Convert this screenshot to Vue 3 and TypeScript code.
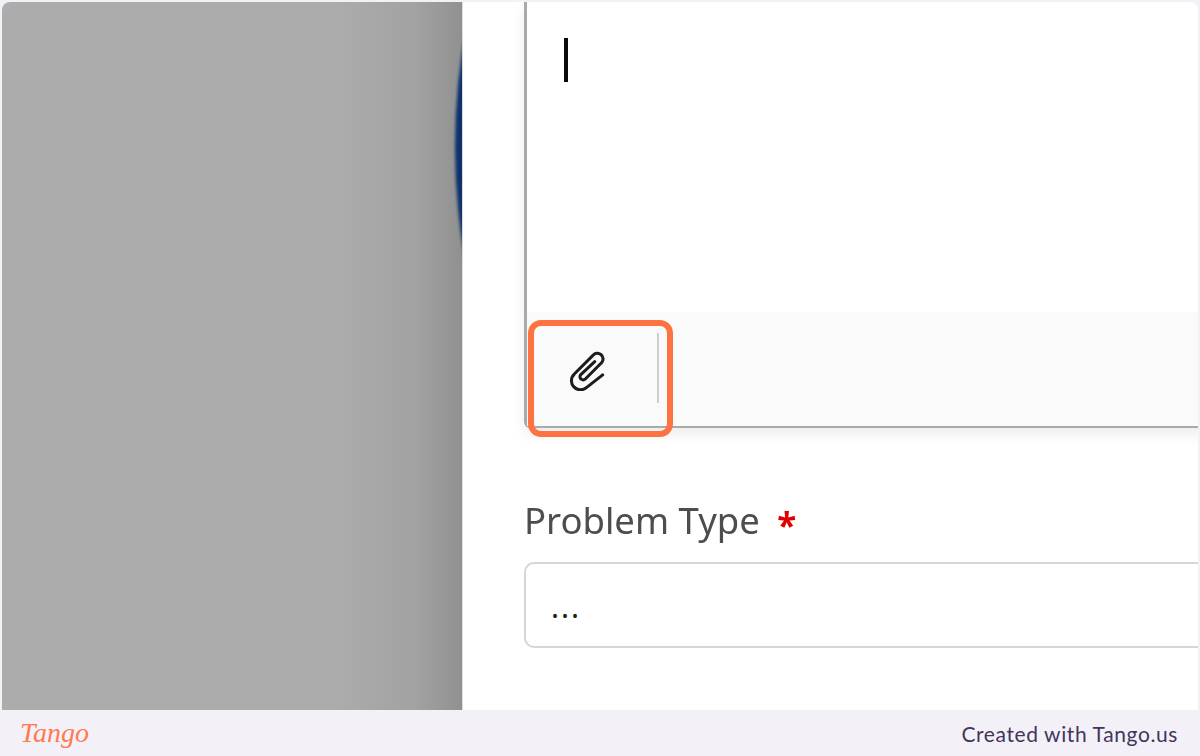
<template>
  <div class="page">
    <div class="shot">
      <div class="backdrop">
        <div class="disc"></div>
        <div class="shade"></div>
      </div>
      <div class="panel">
        <div class="editor">
          <div class="editor-body">
            <span class="caret"></span>
          </div>
          <div class="toolbar">
            <button class="attach" type="button" aria-label="Attach file">
              <svg width="39" height="41" viewBox="0 0 44 46" fill="none">
                <path
                  d="M38 28 L20 42 A10 10 0 0 1 6 27 L27 6 A6 6 0 0 1 37 14 L19 32 A3.2 3.2 0 0 1 13 28 L29 13"
                  stroke="#1c1c1c"
                  stroke-width="3.4"
                  stroke-linecap="round"
                  stroke-linejoin="round"
                />
              </svg>
            </button>
            <span class="divider"></span>
            <span class="highlight"></span>
          </div>
        </div>
        <div class="field">
          <label class="field-label">Problem Type <span class="required">*</span></label>
          <div class="select">...</div>
        </div>
      </div>
    </div>
    <footer class="footer">
      <span class="logo">Tango</span>
      <span class="credit">Created with Tango.us</span>
    </footer>
  </div>
</template>

<script setup lang="ts">
</script>

<style>
html,
body {
  margin: 0;
  background: #f3f1f7;
}
</style>

<style scoped>
.page {
  width: 1200px;
  height: 756px;
  overflow: hidden;
  display: flex;
  flex-direction: column;
  background: #f3f1f7;
}

.shot {
  height: 708px;
  margin: 2px 2px 0;
  display: flex;
  overflow: hidden;
  border-radius: 8px 8px 0 0;
  background: #fff;
}

.backdrop {
  position: relative;
  width: 460px;
  flex-shrink: 0;
  overflow: hidden;
  background: #acacac;
  border-right: 1px solid #dcdcdc;
}

.disc {
  position: absolute;
  left: 453px;
  top: -505px;
  width: 1300px;
  height: 1300px;
  border-radius: 50%;
  background: #0f3a80;
  filter: blur(1.5px);
}

.shade {
  position: absolute;
  inset: 0;
  background: linear-gradient(90deg, rgba(0, 0, 0, 0) 72%, rgba(0, 0, 0, 0.06) 90%, rgba(0, 0, 0, 0.16) 100%);
}

.panel {
  flex: 1;
  min-width: 0;
  padding-left: 61px;
  overflow: hidden;
}

.editor {
  width: 800px;
  border-left: 3px solid #aaa;
  border-bottom: 2px solid #aaa;
  border-bottom-left-radius: 6px;
  box-shadow: 0 6px 14px rgba(0, 0, 0, 0.08);
}

.editor-body {
  height: 310px;
  padding: 36px 0 0 37px;
  box-sizing: border-box;
  background: #fff;
}

.caret {
  display: block;
  width: 4px;
  height: 44px;
  background: #0a0a0a;
  filter: blur(0.4px);
}

.toolbar {
  position: relative;
  height: 114px;
  display: flex;
  background: #fafafa;
}

.attach {
  width: 130px;
  height: 114px;
  flex-shrink: 0;
  padding: 2px 0 0 42px;
  border: none;
  background: none;
  display: block;
  text-align: left;
  box-sizing: border-box;
}

.attach svg {
  display: block;
  filter: blur(0.4px);
}

.divider {
  width: 2px;
  height: 70px;
  margin-top: 21px;
  background: #cfcfcf;
}

.highlight {
  position: absolute;
  left: 1px;
  top: 8px;
  width: 145px;
  height: 117px;
  box-sizing: border-box;
  border: 6px solid #ff7343;
  border-radius: 13px;
}

.field {
  margin-top: 67px;
}

.field-label {
  display: block;
  font-family: "Noto Sans", sans-serif;
  font-size: 36.5px;
  line-height: 50px;
  color: #4d4d4d;
  filter: blur(0.4px);
}

.required {
  margin-left: 8px;
  color: #e00000;
  font-weight: 700;
  font-size: 35px;
  line-height: 0;
  vertical-align: -4px;
}

.select {
  width: 800px;
  height: 86px;
  margin-top: 17px;
  padding-left: 25px;
  box-sizing: border-box;
  border: 2px solid #d6d6d6;
  border-radius: 10px;
  font-family: "Noto Sans", sans-serif;
  font-size: 30px;
  letter-spacing: 2px;
  line-height: 86px;
  color: #222;
  background: #fff;
}

.footer {
  height: 46px;
  padding: 0 22px 0 20px;
  display: flex;
  align-items: center;
  justify-content: space-between;
  box-sizing: border-box;
}

.logo {
  font-family: "Liberation Serif", serif;
  font-style: italic;
  font-size: 28px;
  color: #ff7a50;
  line-height: 46px;
}

.credit {
  font-family: Lato, sans-serif;
  font-size: 21px;
  letter-spacing: 0.6px;
  color: #43355c;
}
</style>
